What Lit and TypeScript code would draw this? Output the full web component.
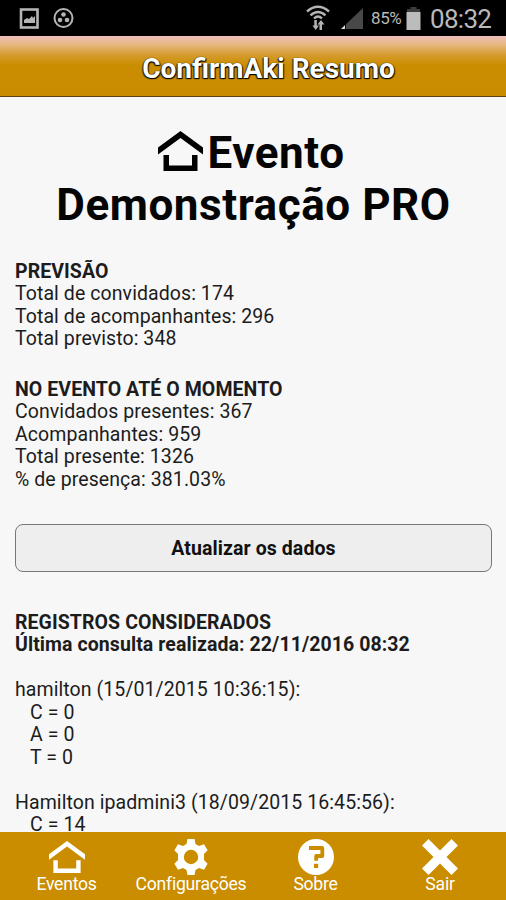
import { LitElement, html, css, svg } from "lit";
import { customElement } from "lit/decorators.js";

const house = svg`<path d="M0 16.500 L22.500 0 L45 16.500 V23.500 L22.500 7 L0 23.500 Z"/><path d="M5.500 24 H11 V34.500 H34 V24 H39.500 V40 H5.500 Z"/>`;

@customElement("status-bar")
class StatusBar extends LitElement {
  static styles = css`
    :host { display: flex; height: 36px; background: #000; color: #b9b9b9; align-items: center; box-sizing: border-box; padding: 0 14px 0 19px; }
    svg { display: block; flex: none; }
    .circle { margin-left: 13px; }
    .grow { flex: 1; }
    .signal { margin-left: 11px; }
    .percent { font-size: 17px; margin-left: 8px; width: 33px; white-space: nowrap; letter-spacing: -0.4px; }
    .battery { margin-left: 2px; }
    .clock { font-size: 26px; line-height: 36px; margin-left: 9px; width: 62px; white-space: nowrap; letter-spacing: -0.7px; padding-top: 2px; }
  `;
  render() {
    return html`
      <svg width="21" height="22" viewBox="0 0 21 22"><rect x="2" y="2.500" width="16.500" height="18" fill="none" stroke="#b4b4b4" stroke-width="2.600"/><path d="M5 16V13L8 11L10 12L13 9L14 11L16 9V16Z" fill="#b4b4b4"/></svg>
      <svg class="circle" width="22" height="22" viewBox="0 0 22 22"><circle cx="10.500" cy="11" r="9" fill="none" stroke="#b4b4b4" stroke-width="2"/><g fill="#b4b4b4"><circle cx="10.500" cy="7.500" r="2.300"/><circle cx="7" cy="13" r="2.300"/><circle cx="14" cy="13" r="2.300"/></g></svg>
      <span class="grow"></span>
      <svg width="24" height="26" viewBox="0 0 24 26"><g fill="none" stroke="#b4b4b4" stroke-width="2.400"><path d="M1 6.500Q12 -3 23 6.500"/><path d="M4.500 10.300Q12 3.500 19.500 10.300"/><path d="M8 13.500Q12 9.500 16 13.500"/></g><path d="M8.300 15H10.800V20.500H13L9.700 25L6.400 20.500H8.300ZM13.500 25V19.500H11.500L15 15L18.500 19.500H16V25Z" fill="#b4b4b4"/></svg>
      <svg class="signal" width="22" height="23" viewBox="0 0 22 23"><path d="M22 1V22H5V17.200Z" fill="#484848"/><path d="M4 18V22H0Z" fill="#ddd"/></svg>
      <span class="percent">85%</span>
      <svg class="battery" width="15" height="23" viewBox="0 0 15 23"><path d="M4.500 0H10.500V2H14V5H1V2H4.500Z" fill="#3c3c3c"/><rect x=".5" y="5" width="14" height="18" fill="#bcbcbc"/></svg>
      <span class="clock">08:32</span>
    `;
  }
}

@customElement("bottom-nav")
class BottomNav extends LitElement {
  static styles = css`
    :host { display: grid; grid-template-columns: 133px 116px 133px 116px; height: 68px; background: #cb8d00; color: #fff; box-sizing: border-box; padding-top: 7px; }
    .item { display: flex; flex-direction: column; align-items: center; font-size: 17.600px; letter-spacing: -0.25px; line-height: 20px; white-space: nowrap; }
    svg { display: block; width: 36px; height: 36px; fill: #fff; margin-bottom: -1px; overflow: visible; }
  `;
  render() {
    return html`
      <div class="item"><svg viewBox="0 -2.500 45 45">${house}</svg>Eventos</div>
      <div class="item"><svg viewBox="0 0 36 36"><path fill-rule="evenodd" d="M14.500 0H21.500L22.500 5L26 7L31 5.300L34.600 11.300L31 15V21L34.600 24.700L31 30.700L26 29L22.500 31L21.500 36H14.500L13.500 31L10 29L5 30.700L1.400 24.700L5 21V15L1.400 11.300L5 5.300L10 7L13.500 5ZM18 10.800A7.200 7.200 0 1 0 18 25.200A7.200 7.200 0 1 0 18 10.800Z"/></svg>Configurações</div>
      <div class="item"><svg viewBox="0 0 36 36"><circle cx="18" cy="18" r="18"/><path d="M11 9H24.300V17H18.200V21.800" fill="none" stroke="#cb8d00" stroke-width="3.800" stroke-linejoin="round"/><rect x="16" y="24.800" width="4.200" height="4.200" fill="#cb8d00"/></svg>Sobre</div>
      <div class="item"><svg viewBox="0 0 36 36"><path d="M6.500 0L18 11.500L29.500 0L36 6.500L24.500 18L36 29.500L29.500 36L18 24.500L6.500 36L0 29.500L11.500 18L0 6.500Z"/></svg>Sair</div>
    `;
  }
}

@customElement("app-root")
class AppRoot extends LitElement {
  static styles = css`
    :host { display: flex; flex-direction: column; height: 900px; overflow: hidden; background: #f7f7f7; color: #1c1c1c; font-family: Roboto, "Liberation Sans", sans-serif; }
    status-bar, bottom-nav { flex: none; }
    .header { flex: none; height: 61px; box-sizing: border-box; border-bottom: 1px solid #5c4210; background: linear-gradient(#efbfbd 0, #e6b67c 9px, #d59b2d 19px, #cb8d00 29px, #c98b00 100%); color: #fff; text-align: center; font-size: 28px; font-weight: 700; line-height: 65px; padding-left: 31px; text-shadow: 0 0 1px #000, 1px 1px 1px #000, -1px 1px 1px #222; white-space: nowrap; }
    .content { flex: 1; min-height: 0; overflow: hidden; padding: 30px 14px 0 15px; font-size: 19.500px; line-height: 22.500px; white-space: nowrap; letter-spacing: 0.08px; }
    h1 { margin: 0; font-size: 44px; line-height: 52px; font-weight: 700; text-align: center; color: #050505; letter-spacing: 0.55px; }
    .name { padding-right: 4px; }
    .home { width: 45px; height: 40px; margin-right: 4px; vertical-align: -3px; }
    b { font-weight: 700; }
    .first { margin-top: 29.800px; }
    .present { margin-top: 28px; }
    .button { display: block; width: 100%; height: 48px; margin: 32.500px 0 40px; border: 1px solid #777; border-radius: 8px; background: #eee; color: #111; font: inherit; font-weight: 700; letter-spacing: inherit; padding: 2px 0 0; }
    .record { margin-top: 22.500px; }
    .values { padding-left: 15px; }
  `;
  render() {
    return html`
      <status-bar></status-bar>
      <div class="header">ConfirmAki Resumo</div>
      <div class="content">
        <h1><span class="name"><svg class="home" viewBox="0 0 45 40">${house}</svg>Evento</span><br />Demonstração PRO</h1>
        <div class="first"><b>PREVISÃO</b><br />Total de convidados: 174<br />Total de acompanhantes: 296<br />Total previsto: 348</div>
        <div class="present"><b>NO EVENTO ATÉ O MOMENTO</b><br />Convidados presentes: 367<br />Acompanhantes: 959<br />Total presente: 1326<br />% de presença: 381.03%</div>
        <button class="button">Atualizar os dados</button>
        <b>REGISTROS CONSIDERADOS<br />Última consulta realizada: 22/11/2016 08:32</b>
        <div class="record">hamilton (15/01/2015 10:36:15):<div class="values">C = 0<br />A = 0<br />T = 0</div></div>
        <div class="record">Hamilton ipadmini3 (18/09/2015 16:45:56):<div class="values">C = 14</div></div>
      </div>
      <bottom-nav></bottom-nav>
    `;
  }
}
